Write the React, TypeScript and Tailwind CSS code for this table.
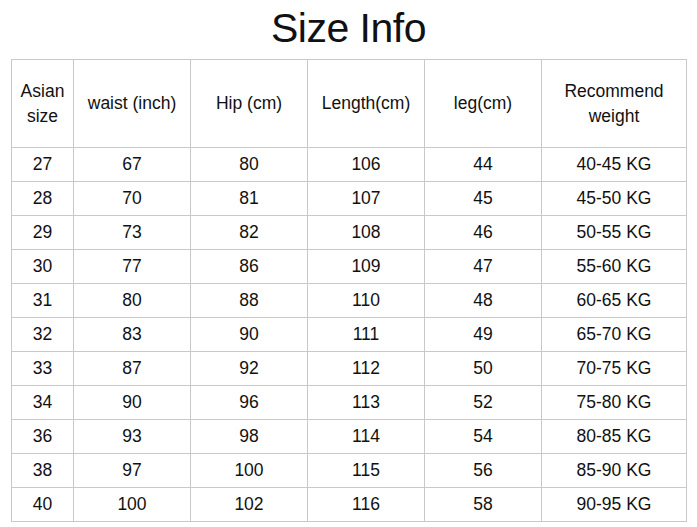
const rows:[string,string,string,string,string,string][]=[
["27","67","80","106","44","40-45 KG"],
["28","70","81","107","45","45-50 KG"],
["29","73","82","108","46","50-55 KG"],
["30","77","86","109","47","55-60 KG"],
["31","80","88","110","48","60-65 KG"],
["32","83","90","111","49","65-70 KG"],
["33","87","92","112","50","70-75 KG"],
["34","90","96","113","52","75-80 KG"],
["36","93","98","114","54","80-85 KG"],
["38","97","100","115","56","85-90 KG"],
["40","100","102","116","58","90-95 KG"]
];

const widths=["w-[62px]","w-[117px]","w-[117px]","w-[117px]","w-[117px]","w-[145px]"];

export default function App(){

return(

<div className="h-[527px] w-[697px] bg-white text-[#111] font-['Liberation_Sans',Arial,sans-serif]">

<div className="flex h-[59px] items-center justify-center pb-[3px]">

<h1 className="text-[41px] leading-none tracking-[-0.5px]">
Size Info
</h1>

</div>

<table className="ml-[11px] table-fixed border-collapse text-center text-[17.5px]">

<colgroup>
{widths.map((w,i)=>(
<col key={i} className={w}/>
))}
</colgroup>

<thead>

<tr className="h-[88px]">

<th className="border border-[#c9c9c9] font-normal leading-[25px]">
Asian<br/>size
</th>

<th className="border border-[#c9c9c9] font-normal">
waist (inch)
</th>

<th className="border border-[#c9c9c9] font-normal">
Hip (cm)
</th>

<th className="border border-[#c9c9c9] font-normal">
Length(cm)
</th>

<th className="border border-[#c9c9c9] font-normal">
leg(cm)
</th>

<th className="border border-[#c9c9c9] font-normal leading-[25px]">
Recommend<br/>weight
</th>

</tr>

</thead>

<tbody>

{rows.map(r=>(

<tr key={r[0]} className="h-[34px]">

{r.map((c,i)=>(

<td
key={i}
className="border border-[#c9c9c9] p-0"
>
{c}
</td>

))}

</tr>

))}

</tbody>

</table>

</div>

);

}
